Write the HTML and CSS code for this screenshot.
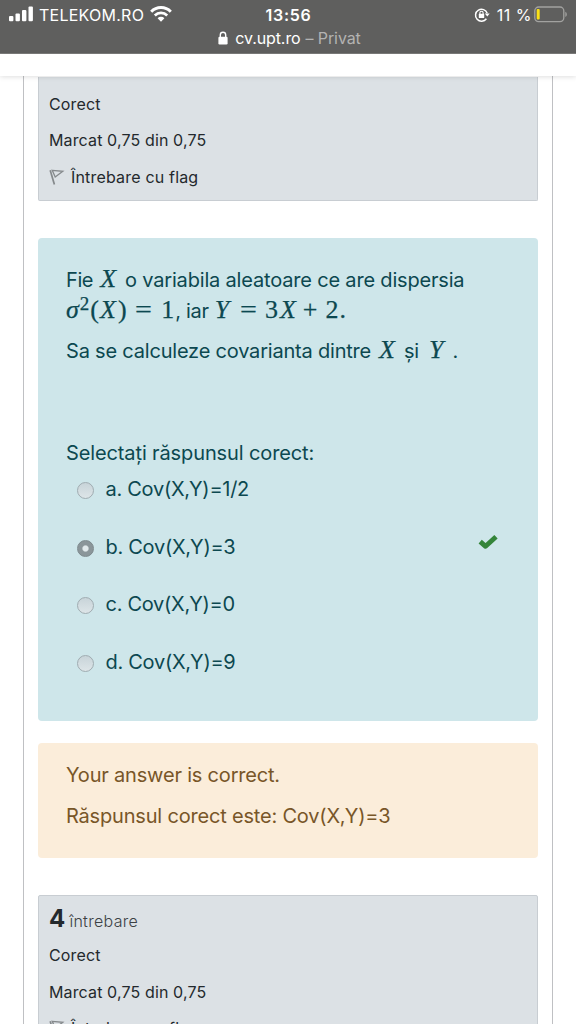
FILE: index.html
```html
<!DOCTYPE html>
<html lang="ro">
<head>
<meta charset="utf-8">
<title>cv.upt.ro</title>
<link rel="stylesheet" href="styles.css">
</head>
<body>
<header class="chrome">
  <div class="status">
    <div class="carrier">
      <svg class="signal" width="25" height="16" viewBox="0 0 25 16" fill="#fff"><rect x="0" y="10" width="4.4" height="5.2" rx="1"/><rect x="6.5" y="7.5" width="4.4" height="7.7" rx="1"/><rect x="13" y="4" width="4.4" height="11.2" rx="1"/><rect x="19.5" y="0.5" width="4.4" height="14.7" rx="1"/></svg>
      <span class="carrier-name">TELEKOM.RO</span>
      <svg class="wifi" width="22" height="16" viewBox="0 0 22 16" fill="none" stroke="#fff"><path d="M1.2 5.7A13.8 13.8 0 0 1 20.8 5.7" stroke-width="3"/><path d="M4.8 9.5A8.7 8.7 0 0 1 17.2 9.5" stroke-width="2.7"/><path d="M7.6 12.2A4.8 4.8 0 0 1 14.4 12.2L11 15.7Z" fill="#fff" stroke="none"/></svg>
    </div>
    <span class="clock">13:56</span>
    <div class="power">
      <svg class="lock-rotation" width="16" height="16" viewBox="0 0 16 16" fill="none" stroke="#fff"><path d="M12.4 11.8A6 6 0 1 1 13.2 6.3" stroke-width="1.5"/><path d="M10.8 6.4H15.7L13.3 9.6Z" fill="#fff" stroke="none"/><rect x="4.8" y="6.8" width="5.4" height="4.2" rx=".6" fill="#fff" stroke="none"/><path d="M5.9 7V5.8a1.6 1.6 0 0 1 3.2 0V7" stroke-width="1.1"/></svg>
      <span class="percent">11 %</span>
      <svg class="battery" width="34" height="17" viewBox="0 0 34 17"><rect x=".8" y="1" width="29" height="14.6" rx="3.8" fill="none" stroke="#a2a2a0" stroke-width="1.3"/><rect x="2.7" y="3" width="3" height="10.6" rx="1" fill="#fbe116"/><path d="M31.3 5.7c2 .8 2 4.4 0 5.2Z" fill="#a2a2a0"/></svg>
    </div>
  </div>
  <div class="address">
    <svg class="padlock" width="10" height="14" viewBox="0 0 10 14"><rect x=".4" y="5.8" width="9.2" height="7.6" rx="1.2" fill="#fff"/><path d="M2.3 6.5V4a2.7 2.7 0 0 1 5.4 0v2.5" fill="none" stroke="#fff" stroke-width="1.4"/></svg>
    <span class="host">cv.upt.ro</span><span class="private">– Privat</span>
  </div>
</header>
<div class="toolbar"></div>
<main class="page">
  <section class="info info-top">
    <div class="info-row"><span class="t-corect">Corect</span></div>
    <div class="info-row"><span class="t-marcat">Marcat 0,75 din 0,75</span></div>
    <div class="info-row"><svg class="flag" width="16" height="18" viewBox="0 0 16 18" fill="none" stroke="#85898c"><path d="M1.2 2.3L5.4 16.5" stroke-width="1.7"/><path d="M3.2 2.3L13.8 3.3L6.2 9Z" stroke-width="1.3"/></svg><span class="t-flag">Întrebare cu flag</span></div>
  </section>

  <section class="question">
    <p class="line first"><span class="w-fie">Fie</span><i class="math x1">X</i><span class="w-rest">o variabila aleatoare ce are dispersia</span></p>
    <p class="line second"><i class="math sigma">σ</i><span class="math power-two">2</span><span class="math open">(</span><i class="math">X</i><span class="math close">)</span><span class="math eq">=</span><span class="math">1</span><span class="w-iar">, iar</span><i class="math y1">Y</i><span class="math eq2">=</span><span class="math">3</span><i class="math x2">X</i><span class="math plus">+</span><span class="math">2</span><span class="math stop">.</span></p>
    <p class="line third"><span class="w-sa">Sa se calculeze covarianta dintre</span><i class="math x3">X</i><span class="w-si">și</span><i class="math y3">Y</i><span class="w-dot">.</span></p>
    <p class="line prompt"><span class="w-prompt">Selectați răspunsul corect:</span></p>
    <div class="options">
      <label class="option"><span class="radio"></span><span>a. Cov(X,Y)=1/2</span></label>
      <label class="option"><span class="radio on"></span><span>b. Cov(X,Y)=3</span><svg class="check" width="20" height="16" viewBox="0 0 20 16"><path d="M2.2 7.6L7.6 12.3L18 2.8" fill="none" stroke="#34853a" stroke-width="4.9" stroke-linejoin="round"/></svg></label>
      <label class="option"><span class="radio"></span><span>c. Cov(X,Y)=0</span></label>
      <label class="option"><span class="radio"></span><span>d. Cov(X,Y)=9</span></label>
    </div>
  </section>

  <section class="feedback">
    <p class="line"><span class="w-your">Your answer is correct.</span></p>
    <p class="line answer"><span class="w-answer">Răspunsul corect este: Cov(X,Y)=3</span></p>
  </section>

  <section class="info info-next">
    <div class="info-row heading"><b class="number">4</b><span class="t-intrebare">întrebare</span></div>
    <div class="info-row"><span class="t-corect">Corect</span></div>
    <div class="info-row"><span class="t-marcat">Marcat 0,75 din 0,75</span></div>
    <div class="info-row"><svg class="flag" width="16" height="18" viewBox="0 0 16 18" fill="none" stroke="#85898c"><path d="M1.2 2.3L5.4 16.5" stroke-width="1.7"/><path d="M3.2 2.3L13.8 3.3L6.2 9Z" stroke-width="1.3"/></svg><span class="t-flag">Întrebare cu flag</span></div>
  </section>
</main>
</body>
</html>
```
FILE: styles.css
```css
* { box-sizing: border-box; }
body {
  margin: 0;
  width: 576px;
  height: 1024px;
  overflow: hidden;
  background: #fff;
  font-family: Inter, "Liberation Sans", sans-serif;
  display: flex;
  flex-direction: column;
}
p { margin: 0; }
span, b, i { white-space: pre; }
svg { flex: none; display: block; }

.chrome { flex: none; height: 54px; background: #5f5f5e; border-bottom: 1px solid #7d7d7c; color: #fff; }
.status { display: grid; grid-template-columns: 1fr auto 1fr; align-items: center; height: 30px; padding: 0 8px 0 9px; font-size: 16px; }
.carrier { display: flex; align-items: center; }
.signal { margin-bottom: 2px; }
.carrier-name { margin-left: 5px; letter-spacing: 0.25px; }
.wifi { margin-left: 6px; margin-bottom: 2px; }
.clock { font-weight: 600; font-size: 16px; letter-spacing: 0.7px; }
.power { display: flex; align-items: center; justify-content: flex-end; }
.percent { margin: 0 2px 0 7px; letter-spacing: 0.5px; }
.battery { margin-bottom: 2px; }
.address { display: flex; align-items: center; justify-content: center; height: 15px; font-size: 16px; padding-left: 3px; letter-spacing: -0.1px; }
.host { margin-left: 7px; }
.private { margin-left: 5px; color: #b3b3b2; }

.toolbar { flex: none; height: 22px; background: #fff; box-shadow: 0 1px 5px rgba(0, 0, 0, 0.13); z-index: 1; }

.page {
  flex: none;
  width: 530px;
  height: 948px;
  margin-left: 23px;
  padding: 1px 14px 0;
  border: solid #bfc0c3;
  border-width: 0 1px;
  overflow: hidden;
}

.info { background: #dce1e5; border: 1px solid #c8cdd2; padding-left: 10px; color: #24292d; font-size: 16px; letter-spacing: 0.13px; border-radius: 2px; }
.info-top { height: 124px; border-top: 0; border-radius: 0 0 2px 2px; padding-top: 8.6px; }
.info-next { height: 180px; margin-top: 37px; padding-top: 7px; }
.info-row { display: flex; align-items: center; height: 36.4px; }
.info-row.heading { height: 34px; align-items: baseline; }
.number { font-size: 24px; line-height: 32px; }
.t-intrebare { margin-left: 4px; font-weight: 300; color: #3c4145; letter-spacing: 0.3px; }
.t-flag { letter-spacing: 0.18px; }
.flag { margin-right: 6px; }

.question { height: 483px; margin-top: 37px; padding: 26px 28px 0; border-radius: 4px; background: #cee6ea; color: #0c4850; font-size: 20px; letter-spacing: -0.18px; }
.line { display: flex; align-items: baseline; height: 30px; line-height: 30px; }
.math { font-family: "Liberation Serif", serif; font-size: 26px; line-height: 30px; letter-spacing: 0; -webkit-text-stroke: 0.25px; }
.first { height: 31px; }
.second { height: 31px; }
.third { margin-top: 8.5px; }
.w-fie { letter-spacing: -0.4px; }
.x1 { margin: 0 9px 0 7px; }
.power-two { font-size: 19px; margin-left: 1px; position: relative; top: -8px; }
.open { margin: 0 1px 0 1px; }
.close { margin-left: 2px; }
.eq { margin: 0 11px 0 9px; transform: scaleX(1.15); }
.w-iar { margin-left: 1px; letter-spacing: -0.3px; }
.y1 { margin-left: 6px; }
.eq2 { margin: 0 9px 0 12px; transform: scaleX(1.15); }
.x2 { margin-left: 2px; }
.plus { margin: 0 8px 0 7px; }
.stop { margin-left: 1px; }
.w-sa { letter-spacing: -0.2px; }
.x3 { margin: 0 9px 0 8px; }
.y3 { margin: 0 9px 0 10px; }
.prompt { margin-top: 73.5px; letter-spacing: -0.12px; }

.options { display: grid; row-gap: 27.5px; margin-top: 6px; letter-spacing: -0.28px; }
.option { display: flex; align-items: center; height: 30px; padding-left: 11px; }
.radio { width: 17px; height: 17px; margin: 3px 11.5px 0 0; border: 1.5px solid #a0acb1; border-radius: 50%; background: linear-gradient(#c8d4d9, #dde5e8); }
.radio.on { border-color: #7d898d; background: radial-gradient(circle, #e2eaec 0 2.5px, #8b969a 3.7px); }
.check { margin: -10px 12px 0 auto; }

.feedback { height: 115px; margin-top: 22px; padding: 17px 28px 0; border-radius: 4px; background: #fbedda; color: #785628; font-size: 20px; letter-spacing: -0.19px; }
.answer { margin-top: 10.5px; }
```
